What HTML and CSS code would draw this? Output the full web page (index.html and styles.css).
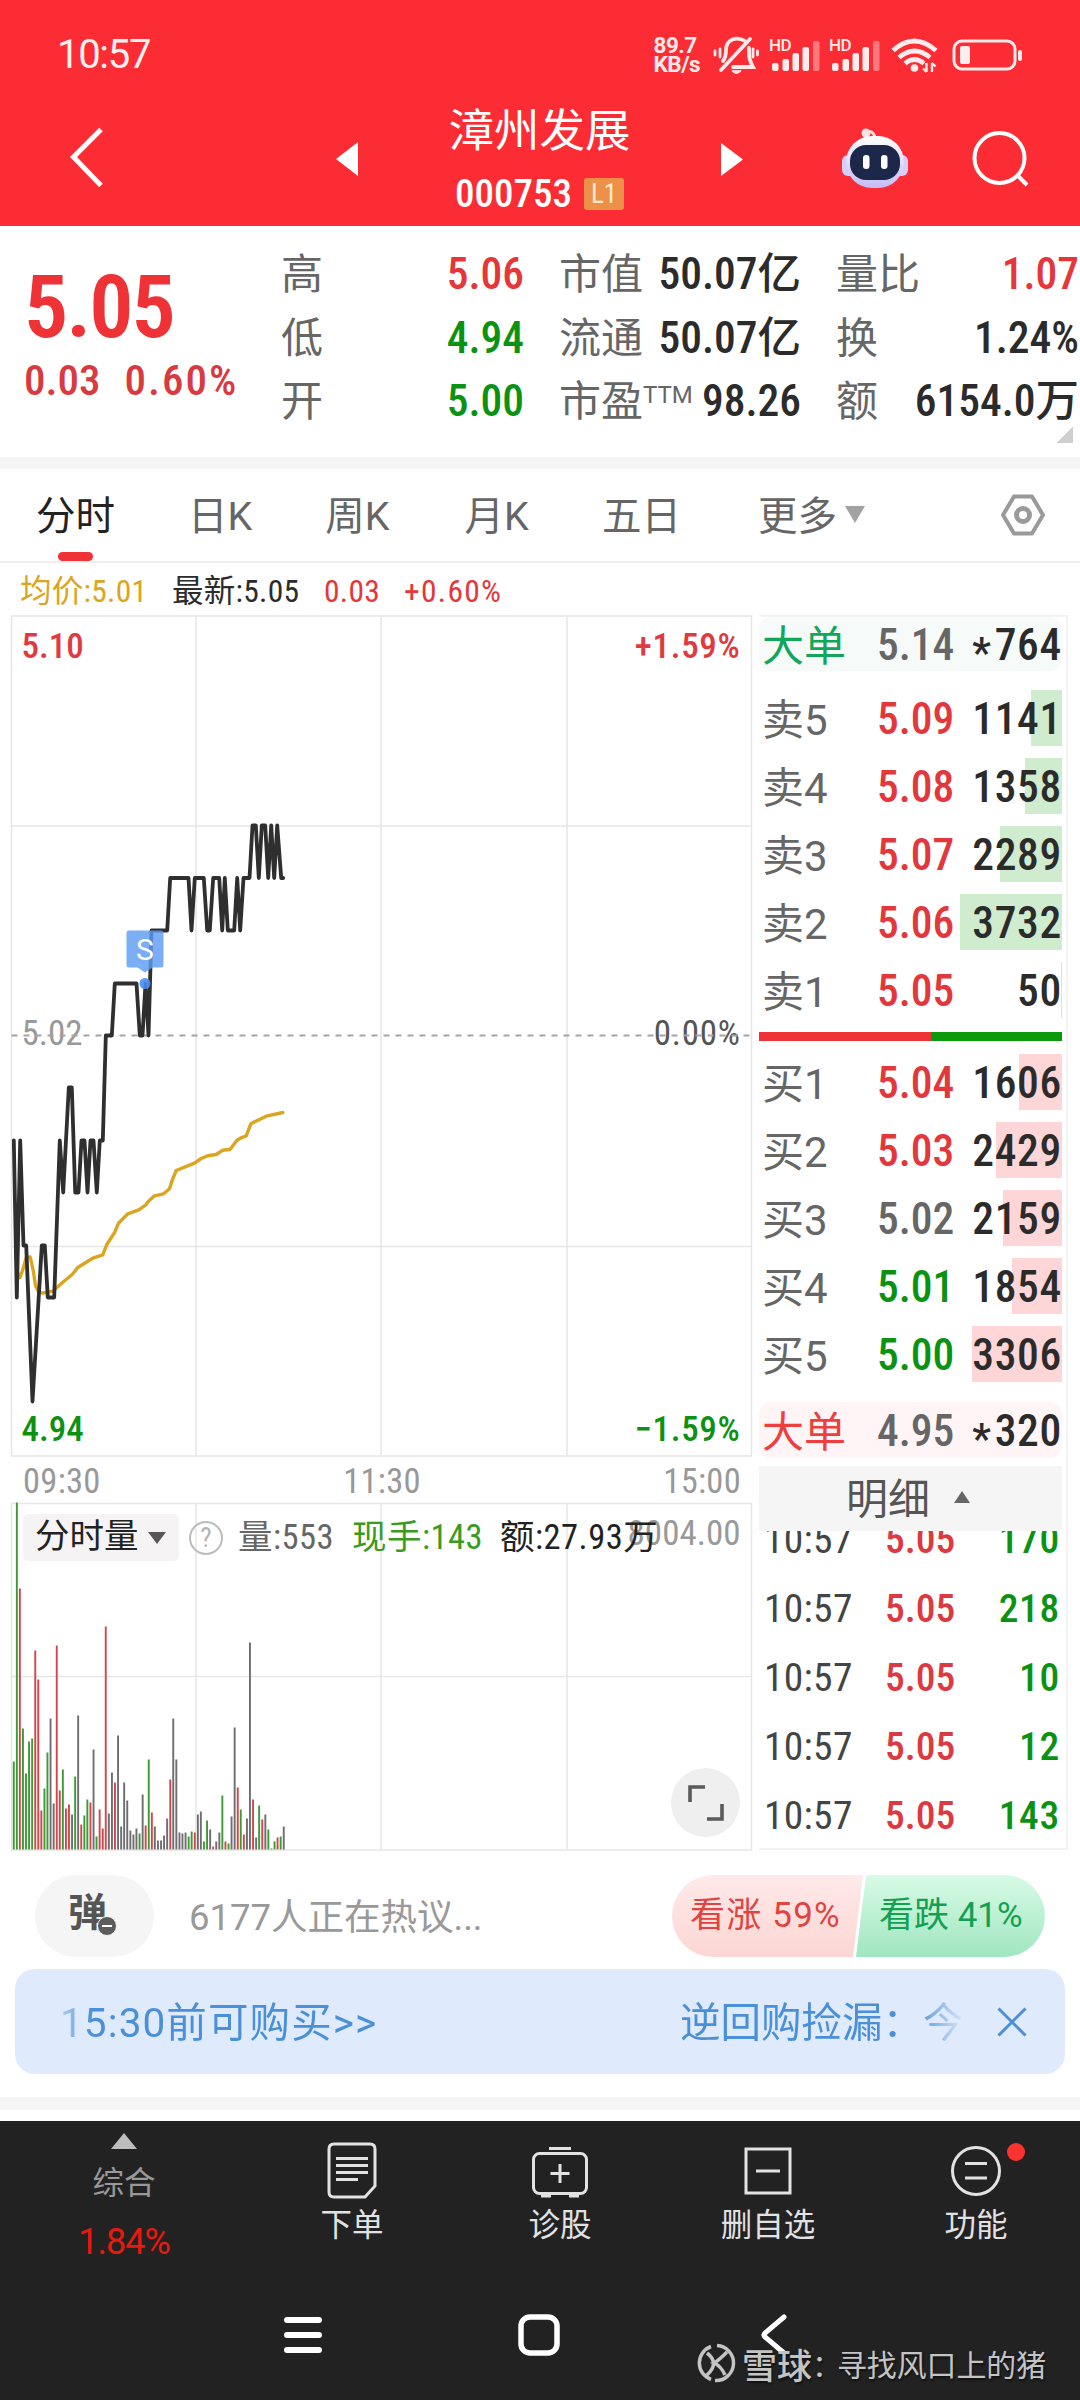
FILE: index.html
```html
<!DOCTYPE html>
<html lang="zh-CN">
<head>
  <meta charset="UTF-8">
  <title>漳州发展 000753</title>
  <link rel="stylesheet" href="styles.css">
</head>
<body>

<header class="header">
  <div class="status">
    <span class="clock">10:57</span>
    <span class="speed">89.7<br>KB/s</span>
    <svg class="bell" width="46" height="40" viewBox="712 34 46 40" fill="none" stroke="#ffe9e9" stroke-width="3.8" stroke-linecap="round">
      <path d="M749 38 L720 69"/>
      <path d="M722 60c3-4 3-7 3-11 0-11 11-14 19-9M748 47v6c0 6 2 9 4 13H732"/>
      <path d="M731 70q4 5 9 0z" fill="#ffe9e9" stroke-width="1"/>
      <path d="M719 48v8M714 50v4M752 48v8M756.500 50v4" stroke-width="2.8"/>
    </svg>
    <svg class="signal" width="50" height="36" viewBox="0 0 50 36">
      <text x="-1" y="14" class="hd">HD</text>
      <g fill="#ffeded"><rect x="2" y="26" width="6.500" height="8" rx="2"/><rect x="12.500" y="22" width="6.500" height="12" rx="2"/><rect x="22.500" y="16" width="6.500" height="18" rx="2"/><rect x="32.500" y="10" width="6.500" height="24" rx="2"/><rect x="43" y="4" width="6.500" height="30" rx="2" opacity=".4"/></g>
    </svg>
    <svg class="signal" width="50" height="36" viewBox="0 0 50 36">
      <text x="-1" y="14" class="hd">HD</text>
      <g fill="#ffeded"><rect x="2" y="26" width="6.500" height="8" rx="2"/><rect x="12.500" y="22" width="6.500" height="12" rx="2"/><rect x="22.500" y="16" width="6.500" height="18" rx="2"/><rect x="32.500" y="10" width="6.500" height="24" rx="2"/><rect x="43" y="4" width="6.500" height="30" rx="2" opacity=".4"/></g>
    </svg>
    <svg class="wifi" width="48" height="36" viewBox="0 0 48 36" fill="none" stroke="#ffeded" stroke-width="4.600">
      <path d="M2 13.500q21-19 43 0M8 20.500q15.500-13 31 0M14 26.500q9.500-8 19 0"/>
      <circle cx="23.500" cy="31" r="3.800" fill="#ffeded" stroke="none"/>
      <path d="M35.500 26v9M32 31.500l3.500 3.500M41 35v-9M44.500 29.500l-3.500-3.500" stroke-width="2.300"/>
    </svg>
    <svg class="battery" width="70" height="32" viewBox="0 0 70 32">
      <rect x="2" y="2" width="61" height="28" rx="8" fill="none" stroke="#ffe9e9" stroke-width="3"/>
      <rect x="8" y="7" width="10" height="18" rx="2" fill="#ffeded"/>
      <rect x="66" y="11" width="4" height="11" rx="2" fill="#ffe9e9"/>
    </svg>
  </div>
  <div class="nav">
    <svg class="back" width="34" height="60" viewBox="70 127 34 60" fill="none" stroke="#fff" stroke-width="5"><path d="M101 129.500L73.500 157l27.500 28.500"/></svg>
    <svg class="prev" width="22" height="60" viewBox="0 0 22 60"><path d="M22 15v34L0 32z" fill="#fff"/></svg>
    <div class="title">
      <h1>漳州发展</h1>
      <p>000753<span class="level">L1</span></p>
    </div>
    <svg width="22" height="60" viewBox="0 0 22 60"><path d="M0 16v33L22 32.500z" fill="#fff"/></svg>
    <svg class="robot" width="68" height="66" viewBox="0 0 68 66">
      <defs>
        <linearGradient id="shell" x1="0" y1="0" x2="0" y2="1"><stop offset="0" stop-color="#fff"/><stop offset="1" stop-color="#c3bcf6"/></linearGradient>
      </defs>
      <path d="M24 5.500c7-3 10 1 10 8" fill="none" stroke="#ffdede" stroke-width="3"/>
      <circle cx="25" cy="6" r="4.500" fill="#ffe3e3"/>
      <rect x="1" y="28" width="14" height="21" rx="6" fill="#d5cffa"/>
      <rect x="53" y="28" width="14" height="21" rx="6" fill="#d5cffa"/>
      <rect x="5" y="9" width="58" height="52" rx="26" fill="url(#shell)"/>
      <rect x="9" y="18" width="50" height="35" rx="16" fill="#1d2749"/>
      <rect x="22" y="28" width="6.500" height="14" rx="3" fill="#fff"/>
      <rect x="40" y="28" width="6.500" height="14" rx="3" fill="#fff"/>
    </svg>
    <svg class="search" width="60" height="60" viewBox="0 0 60 60" fill="none" stroke="#fff" stroke-width="4"><circle cx="28.500" cy="31" r="25"/><path d="M46 48l10 10"/></svg>
  </div>
</header>

<section class="quote">
  <div class="now">
    <div class="price">5.05</div>
    <div class="change"><span>0.03</span><span>0.60%</span></div>
  </div>
  <dl class="stats c1">
    <dt>高</dt><dd class="up">5.06</dd>
    <dt>低</dt><dd class="down">4.94</dd>
    <dt>开</dt><dd class="down">5.00</dd>
  </dl>
  <dl class="stats c2">
    <dt>市值</dt><dd>50.07亿</dd>
    <dt>流通</dt><dd>50.07亿</dd>
    <dt>市盈<sup>TTM</sup></dt><dd>98.26</dd>
  </dl>
  <dl class="stats c3">
    <dt>量比</dt><dd class="up">1.07</dd>
    <dt>换</dt><dd>1.24%</dd>
    <dt>额</dt><dd>6154.0万</dd>
  </dl>
  <i class="corner"></i>
</section>

<nav class="tabs">
  <a class="active">分时</a>
  <a>日K</a>
  <a>周K</a>
  <a>月K</a>
  <a>五日</a>
  <a>更多<svg width="20" height="18" viewBox="0 0 20 18"><path d="M0 0h20L10 17z" fill="#a2a2a2"/></svg></a>
  <svg class="gear" width="44" height="42" viewBox="0 0 44 42" fill="none" stroke="#9a9a9a" stroke-width="4"><path d="M13 2.500h18L42 21 31 39.500H13L2 21z" stroke-linejoin="round"/><circle cx="22" cy="21" r="6.500" stroke-width="5"/></svg>
</nav>

<div class="info">
  <span class="avg">均价:5.01</span>
  <span class="last">最新:5.05</span>
  <span class="up">0.03</span>
  <span class="up">+0.60%</span>
</div>

<main class="main">
  <div class="charts">
    <svg class="chart" width="741" height="842" viewBox="11.500 614.500 741 842">
      <g class="grid">
        <rect x="12" y="615.500" width="740" height="840"/>
        <path d="M196.500 615v840M381.500 615v840M567.500 615v840M12 825.500h740M12 1246h740"/>
      </g>
      <text x="22" y="657" class="up">5.10</text>
      <text x="741" y="657" class="up end">+1.59%</text>
      <text x="22" y="1044" class="mid">5.02</text>
      <text x="741" y="1044" class="zero end">0.00%</text>
      <text x="22" y="1440" class="down">4.94</text>
      <text x="741" y="1440" class="down end">−1.59%</text>
      <path d="M12 1035h740" stroke="#a3a3a3" stroke-width="2" stroke-dasharray="6 6"/>
      <polyline class="avg-line" points="18,1272 20.500,1277 23,1270 27,1256.500 30.700,1256.500 33.700,1270 36,1285 39.300,1291.700 43.300,1292.700 53.300,1290.700 63.300,1281.700 72.700,1274 78.700,1266.700 94,1257.300 103.300,1254.300 107.300,1244 115.300,1231.700 119,1222.700 128.300,1213.300 139.300,1209.300 146,1204.700 149,1200.700 155,1195.300 164,1193.300 170,1188.300 173.300,1178.300 176.700,1170 195,1162.700 201.700,1158 208.300,1155.300 216.700,1154 223.300,1149.700 230.700,1148.700 237.300,1140 241.700,1137.300 246.700,1135.300 251.300,1123.300 266.700,1115.700 283.300,1112"/>
      <polyline class="price-line" points="14.300,1140 17.300,1297 20.700,1140 24,1245 26.700,1245 33,1401 42.300,1245 45.300,1245 48.300,1297 54.700,1297 60.300,1140 63.700,1192 69.300,1087 72.300,1087 75.700,1192 79,1192 82,1140 85,1140 88,1192 91,1140 94,1140 97.300,1192 100.300,1140 103.300,1140 106.300,1035 112.300,1035 115.300,983 137,983 140.300,1035 143,1035 146,983 149,1035 152,930 167.700,930 170.700,877.500 189,877.500 192,930 195.300,877.500 204.300,877.500 207.700,930 210.300,930 213.700,877.500 219.700,877.500 222.700,930 225.300,877.500 228.300,930 234.700,930 237.700,877.500 240.700,930 244,877.500 250,877.500 253,825 256.300,825 259.300,877.500 262.300,825 265.700,825 268.700,877.500 271.700,825 274.700,877.500 277.700,825 281.700,877.500 283.700,877.500"/>
      <path d="M129.500 930h32q2.500 0 2.500 2.500v32q0 2.500-2.500 2.500H153l-7.500 5-7.500-5h-8.500q-2.500 0-2.500-2.500v-32q0-2.500 2.500-2.500z" fill="#5d9df4" opacity=".82"/>
      <text x="145.500" y="959" class="sell">S</text>
      <circle cx="145.500" cy="983" r="5.500" fill="#4a8cf0" opacity=".9"/>
    </svg>
    <div class="times"><span>09:30</span><span>11:30</span><span>15:00</span></div>
    <div class="volume">
      <svg class="chart" width="741" height="348" viewBox="11.500 1502.500 741 348">
        <g class="grid">
          <rect x="12" y="1503" width="740" height="346.500"/>
          <path d="M196.500 1503v346M381.500 1503v346M567.500 1503v346M12 1676h740"/>
        </g>
        <g id="bars"></g>
        <text x="741" y="1544" class="mid end max">8004.00</text>
      </svg>
      <div class="legend">
        <span class="select">分时量<svg width="18" height="12" viewBox="0 0 18 12"><path d="M0 0h18L9 12z" fill="#5a5557"/></svg></span>
        <span class="help">?</span>
        <span class="vol">量:553</span>
        <span class="cur">现手:143</span>
        <span class="amt">额:27.93万</span>
      </div>
      <span class="expand">
        <svg width="36" height="36" viewBox="0 0 36 36" fill="none" stroke="#5a5a5a" stroke-width="3.600"><path d="M17 2H2v15M19 34h15V19"/></svg>
      </span>
    </div>
  </div>

  <div class="book">
    <div class="big sell-big"><b>大单</b><span>5.14</span><em><small>*</small>764</em></div>
    <ul class="levels ask">
      <li><b>卖5</b><span class="up">5.09</span><em>1141</em><i style="width:31px"></i></li>
      <li><b>卖4</b><span class="up">5.08</span><em>1358</em><i style="width:37px"></i></li>
      <li><b>卖3</b><span class="up">5.07</span><em>2289</em><i style="width:62px"></i></li>
      <li><b>卖2</b><span class="up">5.06</span><em>3732</em><i style="width:102px"></i></li>
      <li><b>卖1</b><span class="up">5.05</span><em>50</em><i style="width:1px"></i></li>
    </ul>
    <div class="ratio"><i style="width:172px"></i></div>
    <ul class="levels bid">
      <li><b>买1</b><span class="up">5.04</span><em>1606</em><i style="width:43px"></i></li>
      <li><b>买2</b><span class="up">5.03</span><em>2429</em><i style="width:66px"></i></li>
      <li><b>买3</b><span>5.02</span><em>2159</em><i style="width:59px"></i></li>
      <li><b>买4</b><span class="down">5.01</span><em>1854</em><i style="width:50px"></i></li>
      <li><b>买5</b><span class="down">5.00</span><em>3306</em><i style="width:90px"></i></li>
    </ul>
    <div class="big buy-big"><b>大单</b><span>4.95</span><em><small>*</small>320</em></div>
    <div class="detail">明细<svg width="16" height="12" viewBox="0 0 16 12"><path d="M0 12h16L8 0z" fill="#666"/></svg></div>
    <ul class="trades">
      <li><b>10:57</b><span>5.05</span><em>170</em></li>
      <li><b>10:57</b><span>5.05</span><em>218</em></li>
      <li><b>10:57</b><span>5.05</span><em>10</em></li>
      <li><b>10:57</b><span>5.05</span><em>12</em></li>
      <li><b>10:57</b><span>5.05</span><em>143</em></li>
    </ul>
  </div>
</main>

<section class="talk">
  <span class="danmu">弹<svg width="20" height="20" viewBox="0 0 20 20"><circle cx="10" cy="10" r="9.500" fill="#5c5c5c" stroke="#f5f5f5"/><path d="M5 10h10" stroke="#fff" stroke-width="2"/></svg></span>
  <span class="hot">6177人正在热议...</span>
  <div class="vote">
    <span class="bull">看涨 59%</span>
    <span class="bear">看跌 41%</span>
  </div>
</section>

<div class="banner">
  <span class="scroll-a">15:30前可购买&gt;&gt;</span>
  <span class="scroll-b">逆回购捡漏：今</span>
  <svg width="30" height="30" viewBox="0 0 30 30" stroke="#4a90d9" stroke-width="3"><path d="M1.500 1.500l27 27M28.500 1.500l-27 27"/></svg>
</div>

<footer class="footer">
  <div class="tools">
    <div class="index">
      <svg width="26" height="16" viewBox="0 0 26 16"><path d="M0 16h26L13 0z" fill="#bdbdbd"/></svg>
      <span>综合</span>
      <strong>1.84%</strong>
    </div>
    <a>
      <svg width="60" height="60" viewBox="0 0 60 60"><path d="M12 4h36q5 0 5 5v37L43 57H12q-5 0-5-5V9q0-5 5-5zM14 18.500h32M14 25.500h32M14 32.500h32M14 39.500h22"/></svg>
      下单
    </a>
    <a>
      <svg width="60" height="60" viewBox="0 0 60 60"><rect x="3.500" y="13.500" width="53" height="40" rx="6"/><path d="M19 8.500h22M30 24v19M20.500 33.500h19M11 56h10M39 56h10"/></svg>
      诊股
    </a>
    <a>
      <svg width="60" height="60" viewBox="0 0 60 60"><rect x="8" y="9" width="44" height="44"/><path d="M18 31h24"/></svg>
      删自选
    </a>
    <a>
      <svg width="60" height="60" viewBox="0 0 60 60"><circle cx="30" cy="31" r="23.500"/><path d="M19 23.500h22M19 38h22"/></svg>
      功能
      <i class="dot"></i>
    </a>
  </div>
  <div class="sysnav">
    <svg width="40" height="44" viewBox="0 0 40 44" stroke="#fff" stroke-width="6" stroke-linecap="round"><path d="M4 7h32M4 22h32M4 37h32"/></svg>
    <svg class="home" width="42" height="44" viewBox="0 0 42 44" fill="none" stroke="#fff" stroke-width="5.500"><rect x="3" y="4" width="36" height="36" rx="9"/></svg>
    <svg width="28" height="44" viewBox="0 0 28 44" fill="none" stroke="#fff" stroke-width="5" stroke-linecap="round"><path d="M24 4L5 20q-2 2 0 4l19 16"/></svg>
  </div>
  <div class="mark">
    <svg width="40" height="40" viewBox="0 0 40 40" fill="none" stroke="#c4c4c4" stroke-width="3.500"><path d="M14 3.500A17.500 17.500 0 0 0 14 36.500M20 2.500a17.500 17.500 0 1 1-2 35M10 10q13 10 0 22M30 9q-9 9-13 11 7 3 11 12"/></svg>
    <b>雪球</b><span class="colon">：</span>寻找风口上的猪
  </div>
</footer>

<script>
// 每分钟成交量：高度 + 颜色 (g 跌, r 涨, k 平)
const bars = '88g 347g 261r 121g 76g 108g 111g 199r 170r 39r 61g 97g 131k 46k 204r 59r 80g 41r 45r 35k 73g 134k 25r 34g 50g 47r 100k 13g 40r 21r 223r 36k 77k 67r 114k 23k 67k 49k 19k 15k 21k 16g 55k 24r 90g 37r 23k 9k 9k 14k 31k 70r 131k 90k 17k 16k 17k 13g 18g 17r 35k 38k 8g 29g 20k 3r 8k 17k 54g 8r 6g 33k 122k 62r 40g 15r 31k 207k 50r 12k 44g 30r 35k 20g 1g 8g 12r 13g 23k';
const colors = { g: '#3d9a35', r: '#d2464b', k: '#6e6e72' };
let html = '';
bars.split(' ').forEach((b, i) => {
  const h = parseInt(b);
  html += `<rect x="${(13.3 + i * 3.068).toFixed(1)}" y="${1849 - h}" width="1.900" height="${h}" fill="${colors[b.slice(-1)]}"/>`;
});
document.getElementById('bars').innerHTML = html;
</script>
</body>
</html>
```
FILE: styles.css
```css
* {
  box-sizing: border-box;
  margin: 0;
  padding: 0;
}

body {
  width: 1080px;
  height: 2400px;
  overflow: hidden;
  background: #fff;
  color: #2c2c2c;
  font-family: Roboto, "Noto Sans CJK SC", sans-serif;
  font-stretch: 75%;
}

ul { list-style: none; }
b, em, i { font-style: normal; font-weight: 400; }
svg { display: block; flex: none; }

.up { color: #e6363a; fill: #e03a40; }
.down { color: #0b9212; fill: #0b9212; }

/* header */
.header {
  height: 226px;
  background: #fb2c33;
  color: #fff;
}

.status {
  display: flex;
  align-items: center;
  height: 100px;
  padding: 9px 58px 0 57px;
}

.clock {
  flex: 1;
  font-size: 40px;
  font-stretch: 100%;
  letter-spacing: -1.300px;
  color: #fff0f0;
}

.speed {
  width: 49px;
  font-size: 22.500px;
  line-height: 19px;
  font-weight: 700;
  font-stretch: 100%;
  letter-spacing: -0.500px;
  margin-left: -2px;
  color: #ffeaea;
}

.bell, .signal { margin-left: 10.500px; overflow: visible; }
.wifi { margin-left: 11px; }
.battery { margin-left: 13px; }

.hd {
  font-size: 17px;
  font-weight: 500;
  font-stretch: 100%;
  letter-spacing: -0.500px;
  fill: #ffeded;
}

.nav {
  display: flex;
  align-items: flex-start;
  height: 126px;
  padding-left: 70px;
}

.nav svg { margin-top: 27px; }
.nav .prev { margin-left: 232px; }
.nav .robot { margin-left: 98px; }
.nav .search { margin-left: 62px; }

.title {
  width: 363px;
  padding-top: 6px;
  text-align: center;
}

.title h1 {
  font-size: 45.500px;
  line-height: 52px;
  font-weight: 400;
}

.title p {
  display: flex;
  justify-content: center;
  align-items: center;
  gap: 12px;
  height: 40px;
  margin-top: 16px;
  font-size: 39px;
  font-weight: 500;
}

.level {
  width: 40px;
  height: 32px;
  border-radius: 3px;
  background: #ec9147;
  color: #ffe9d2;
  font-size: 27px;
  font-weight: 400;
  line-height: 32px;
}

/* quote */
.quote {
  display: flex;
  position: relative;
  height: 243px;
  border-bottom: 12px solid #f5f5f5;
}

.now {
  width: 281px;
  padding: 32px 0 0 24px;
  color: #ee3235;
}

.price {
  font-size: 88px;
  line-height: 98px;
  font-weight: 600;
  letter-spacing: -2px;
}

.change {
  display: flex;
  gap: 24px;
  font-size: 43px;
  line-height: 48px;
  font-weight: 500;
  color: #d93a3f;
}
.change span:last-child { letter-spacing: 2px; }

.stats {
  display: grid;
  grid-template-columns: 40px 1fr;
  grid-auto-rows: 63.500px;
  align-content: start;
  padding-top: 17px;
  line-height: 63px;
  white-space: nowrap;
}

.stats dt { font-size: 42px; color: #666; }
.stats dd { font-size: 43.500px; font-weight: 500; text-align: right; }
.stats sup { font-size: 24px; line-height: 0; vertical-align: 13px; font-stretch: 100%; }
.stats dd:not(.up):not(.down) { color: #2b2b2b; }

.c1 { width: 243px; }
.c2 { width: 242px; margin-left: 35px; }
.c3 { width: 243px; margin-left: 35px; }

.corner {
  position: absolute;
  right: 7px;
  bottom: 14px;
  width: 16px;
  height: 16px;
  background: linear-gradient(135deg, transparent 50%, #cfcfcf 50%);
}

/* tabs */
.tabs {
  display: flex;
  align-items: center;
  height: 94px;
  padding: 0 35px 5px 36px;
  border-bottom: 2px solid #eee;
  font-size: 39.500px;
  font-stretch: 100%;
  color: #666;
}

.tabs a { position: relative; display: flex; align-items: center; margin-right: 73px; }
.tabs a:nth-child(3) { margin-right: 75px; }
.tabs a:nth-child(5) { margin-right: 77px; }
.tabs a svg { margin: 4px 0 0 8px; }
.tabs .gear { margin: 5px 0 0 auto; }

.tabs .active { color: #222; }
.tabs .active::after {
  content: "";
  position: absolute;
  left: 22px;
  bottom: -20px;
  width: 35px;
  height: 9px;
  border-radius: 5px;
  background: #ee3235;
}

.info {
  display: flex;
  height: 52px;
  padding-left: 20px;
  font-size: 31.500px;
  line-height: 57px;
  letter-spacing: 0.300px;
}

.info .avg { width: 152px; color: #dba520; }
.info .last { width: 152px; }
.info .up { width: 80px; }
.info .up:last-child { letter-spacing: 1.300px; }

/* charts */
.main {
  display: flex;
  height: 1235px;
  padding-left: 11px;
}

.charts { width: 748px; }
.chart { overflow: visible; }
.chart text { font-size: 35px; font-weight: 500; }
.chart .end { text-anchor: end; letter-spacing: 0.700px; }
.chart .mid { fill: #999; font-weight: 400; }
.chart .zero { fill: #555; font-weight: 400; }
.chart .max { letter-spacing: 0; }
.chart .sell { font-size: 30px; font-weight: 400; font-stretch: 100%; fill: #fff; text-anchor: middle; }

.grid { fill: none; stroke: #e6e6e6; stroke-width: 1.500; }

.avg-line, .price-line {
  fill: none;
  stroke-width: 3.400;
  stroke-linejoin: round;
  stroke-linecap: round;
}
.avg-line { stroke: #dba520; }
.price-line { stroke: #2f2f2f; stroke-width: 3.800; }

.times {
  display: flex;
  justify-content: space-between;
  width: 730px;
  height: 46px;
  padding-left: 12px;
  font-size: 34.500px;
  line-height: 49px;
  letter-spacing: 0.300px;
  color: #999;
}

.volume { position: relative; }

.legend {
  position: absolute;
  top: 11px;
  left: 12px;
  display: flex;
  align-items: center;
  height: 47px;
  font-size: 34.500px;
  line-height: 42px;
  white-space: nowrap;
}

.select {
  display: flex;
  align-items: center;
  gap: 9px;
  width: 156px;
  height: 47px;
  padding: 0 0 3px 12px;
  border-radius: 5px;
  background: #f5f3f4;
  color: #222;
}
.select svg { margin-top: 3px; }

.help {
  width: 34px;
  height: 34px;
  margin: 0 15px 0 10px;
  border: 2.500px solid #bdbdbd;
  border-radius: 50%;
  color: #b5b5b5;
  font-size: 27px;
  line-height: 30px;
  text-align: center;
}

.vol, .cur, .amt { padding-bottom: 2px; letter-spacing: 0.500px; }
.vol { width: 114px; color: #666; }
.cur { width: 148px; color: #3a9b23; }
.amt { color: #222; }

.expand {
  position: absolute;
  right: 19px;
  bottom: 14px;
  display: flex;
  align-items: center;
  justify-content: center;
  width: 69px;
  height: 69px;
  border-radius: 50%;
  background: #efefef;
}

/* order book */
.book {
  width: 309px;
  height: 1235px;
  padding-right: 4px;
  border: 2px solid #f3f3f3;
  border-left: 0;
  font-size: 43.500px;
}

.book b, .book span, .book em { position: relative; }
.book b { width: 118px; padding-left: 3px; font-size: 42px; }
.book span { flex: 1; color: #666; font-weight: 500; }
.book em { font-weight: 500; text-align: right; color: #2b2b2b; letter-spacing: 0.700px; }
.book span.up { color: #e2373c; }
.book span.down { color: #0b9212; }
.book small { font-size: 42px; position: relative; top: 7px; margin-right: 3px; }

.big {
  display: flex;
  align-items: center;
  height: 56px;
  border-radius: 12px;
}
.big b { padding-bottom: 6px; }
.sell-big { height: 54px; background: #f6faf9; padding-top: 3px; }
.sell-big b { color: #12a65a; }
.buy-big { background: #fff5f6; padding-top: 2px; margin-top: 14px; }
.buy-big b { color: #ee3f3f; }

.levels li {
  position: relative;
  display: flex;
  align-items: center;
  height: 68px;
  padding-top: 2px;
}
.levels b { color: #666; font-stretch: 100%; padding-bottom: 6px; }
.levels i {
  position: absolute;
  right: 0;
  top: 6px;
  height: 56px;
}
.levels em { z-index: 1; }
.ask { margin-top: 13px; }
.ask i { background: #d0ecce; }
.bid i { background: #fed6d8; }
.bid { margin-top: 7px; }

.ratio { height: 9px; margin-top: 8px; background: #0a9a0a; }
.ratio i { display: block; height: 9px; background: #ee3235; }

.detail {
  display: flex;
  align-items: center;
  gap: 24px;
  height: 65px;
  margin-top: 8px;
  padding: 0 0 7px 87px;
  background: #f5f5f5;
  color: #555;
  font-size: 42px;
}
.detail svg { margin-top: 4px; }

.trades { height: 317px; overflow: hidden; font-size: 39.500px; }
.trades li {
  display: flex;
  align-items: center;
  height: 69px;
  padding-right: 2px;
}
.trades li:first-child { margin-top: -26px; }
.trades b { width: 126px; padding-left: 5px; font-size: 39.500px; letter-spacing: 0.300px; color: #444; }
.trades span { color: #dc3a40; }
.trades em { color: #0b9212; }

/* discussion */
.talk {
  display: flex;
  align-items: center;
  height: 82px;
  margin: 25px 35px 0;
}

.danmu {
  position: relative;
  width: 119px;
  height: 82px;
  border-radius: 41px;
  background: #f5f5f5;
  color: #555;
  font-size: 39px;
  font-weight: 700;
  line-height: 76px;
  padding-left: 33px;
}
.danmu svg { position: absolute; left: 62px; top: 41px; }

.hot {
  flex: 1;
  padding: 0 0 3px 35px;
  font-size: 36.500px;
  font-stretch: 100%;
  color: #999;
}

.vote {
  position: relative;
  display: flex;
  width: 373px;
  height: 82px;
  border-radius: 41px;
  overflow: hidden;
  font-size: 35px;
  line-height: 82px;
  font-stretch: 100%;
}
.bull, .bear { height: 82px; white-space: nowrap; }
.bull {
  width: 191px;
  padding-left: 18px;
  margin-right: -10px;
  background: linear-gradient(#ffeaea, #fcd6d3);
  clip-path: polygon(0 0, 100% 0, 181px 100%, 0 100%);
  color: #df4440;
  letter-spacing: 1.200px;
}
.bear {
  width: 192px;
  padding-left: 26px;
  background: linear-gradient(#d8fbe6, #a0e6c0);
  clip-path: polygon(13px 0, 100% 0, 100% 100%, 3px 100%);
  color: #14a051;
}

.banner {
  display: flex;
  align-items: center;
  height: 105px;
  margin: 12px 15px 0 15px;
  padding: 0 38px 0 45px;
  border-radius: 20px;
  background: #dfeafc;
  color: #4a90d9;
  font-size: 40.500px;
  font-stretch: 100%;
}
.banner span { padding-bottom: 4px; }
.scroll-a { flex: 1; letter-spacing: 1.100px; -webkit-mask-image: linear-gradient(90deg, rgba(0,0,0,.3), #000 32px); mask-image: linear-gradient(90deg, rgba(0,0,0,.3), #000 32px); }
.scroll-b { width: 317px; white-space: nowrap; -webkit-mask-image: linear-gradient(90deg, #000 235px, transparent 285px); mask-image: linear-gradient(90deg, #000 235px, transparent 285px); }

/* footer */
.footer {
  position: relative;
  height: 302px;
  margin-top: 47px;
  background: #222;
  box-shadow: 0 -11px #fff, 0 -24px #f5f5f5;
  color: #e2e2e2;
}

.tools { display: flex; height: 160px; font-size: 31.500px; }
.tools a {
  position: relative;
  display: flex;
  flex-direction: column;
  align-items: center;
  width: 208px;
  padding-top: 19px;
  line-height: 51px;
}
.tools a svg { fill: none; stroke: #e2e2e2; stroke-width: 3; }

.index {
  display: flex;
  flex-direction: column;
  align-items: center;
  width: 248px;
  padding-top: 12px;
}
.index span { color: #999; line-height: 48px; margin-top: 11px; }
.index strong { color: #e8190f; font-size: 36px; font-weight: 400; font-stretch: 100%; letter-spacing: -1px; line-height: 48px; margin-top: 10px; }

.dot {
  position: absolute;
  left: 135px;
  top: 22px;
  width: 18px;
  height: 18px;
  border-radius: 50%;
  background: #fb3330;
}

.sysnav {
  display: flex;
  margin: 32px 0 0 283px;
}
.sysnav .home { margin: 0 200px 0 195px; }

.mark {
  position: absolute;
  left: 697px;
  top: 218px;
  display: flex;
  align-items: center;
  height: 48px;
  font-size: 29.900px;
  color: #c4c4c4;
  text-shadow: 1px 2px 2px #111;
  white-space: nowrap;
}
.mark b { margin-left: 5px; font-size: 35px; font-weight: 500; }
.colon { margin-right: -5px; }
```
